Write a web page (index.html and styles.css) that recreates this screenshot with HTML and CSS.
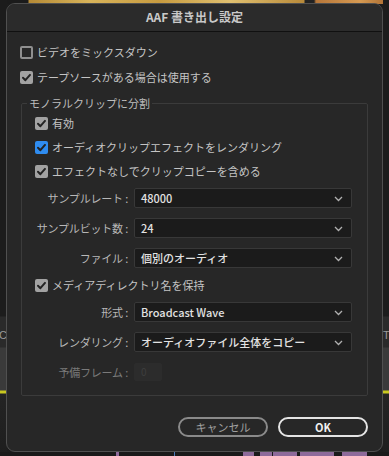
FILE: index.html
```html
<!DOCTYPE html>
<html lang="ja">
<head>
<meta charset="utf-8">
<link rel="stylesheet" href="styles.css">
</head>
<body>
<div class="backdrop">
  <div class="bg-top"></div>
  <div class="bg-left"><span class="bg-letter">C</span></div>
  <div class="bg-right"><span class="bg-letter">T</span></div>
  <div class="bg-bottom">
    <i class="clip c1"></i><i class="clip c2"></i><i class="clip c3"></i><i class="clip c4"></i><i class="clip c5"></i><i class="clip c6"></i><i class="mark"></i>
  </div>
</div>
<div class="stage">
  <div class="dialog">
    <div class="titlebar">AAF 書き出し設定</div>
    <div class="content">
      <label class="check-row first"><span class="box"></span>ビデオをミックスダウン</label>
      <label class="check-row second"><span class="box checked"><svg viewBox="0 0 13 13"><path d="M3 6.8 L5.4 9.2 L10 3.9" /></svg></span>テープソースがある場合は使用する</label>

      <fieldset class="group">
        <legend>モノラルクリップに分割</legend>
        <label class="check-row g1"><span class="box checked"><svg viewBox="0 0 13 13"><path d="M3 6.8 L5.4 9.2 L10 3.9" /></svg></span>有効</label>
        <label class="check-row g2"><span class="box checked blue"><svg viewBox="0 0 13 13"><path d="M3 6.8 L5.4 9.2 L10 3.9" /></svg></span>オーディオクリップエフェクトをレンダリング</label>
        <label class="check-row g2"><span class="box checked"><svg viewBox="0 0 13 13"><path d="M3 6.8 L5.4 9.2 L10 3.9" /></svg></span>エフェクトなしでクリップコピーを含める</label>

        <div class="field s1"><span class="flabel">サンプルレート :</span><div class="select">48000<svg class="chev" viewBox="0 0 9 6"><path d="M1 1 L4.5 4.5 L8 1"/></svg></div></div>
        <div class="field s2"><span class="flabel">サンプルビット数 :</span><div class="select">24<svg class="chev" viewBox="0 0 9 6"><path d="M1 1 L4.5 4.5 L8 1"/></svg></div></div>
        <div class="field s2"><span class="flabel">ファイル :</span><div class="select">個別のオーディオ<svg class="chev" viewBox="0 0 9 6"><path d="M1 1 L4.5 4.5 L8 1"/></svg></div></div>

        <label class="check-row g3"><span class="box checked"><svg viewBox="0 0 13 13"><path d="M3 6.8 L5.4 9.2 L10 3.9" /></svg></span>メディアディレクトリ名を保持</label>

        <div class="field s1"><span class="flabel">形式 :</span><div class="select">Broadcast Wave<svg class="chev" viewBox="0 0 9 6"><path d="M1 1 L4.5 4.5 L8 1"/></svg></div></div>
        <div class="field s2"><span class="flabel">レンダリング :</span><div class="select">オーディオファイル全体をコピー<svg class="chev" viewBox="0 0 9 6"><path d="M1 1 L4.5 4.5 L8 1"/></svg></div></div>
        <div class="field s2 disabled"><span class="flabel">予備フレーム :</span><div class="numbox">0</div></div>
      </fieldset>

      <div class="buttons">
        <button class="btn cancel">キャンセル</button>
        <button class="btn ok">OK</button>
      </div>
    </div>
  </div>
</div>
</body>
</html>
```

FILE: styles.css
```css
* { box-sizing: border-box; }
html, body {
  margin: 0;
  padding: 0;
}
body {
  width: 389px;
  height: 456px;
  overflow: hidden;
  background: #1d1d1d;
  font-family: "Noto Sans CJK JP", "Noto Sans", sans-serif;
  position: relative;
}

/* backdrop (app behind the modal) */
.backdrop {
  position: absolute;
  inset: 0;
  z-index: 0;
}
.bg-top {
  position: absolute;
  left: 0; top: 0; width: 389px; height: 4px;
  background: linear-gradient(90deg, #1b1b1b 0, #1b1b1b 28px, #b58a36 29px, #d8b45a 90px, #c79b40 160px, #e0c070 230px, #b88a3a 304px, #222 305px, #222 314px, #b7773a 316px, #d69a52 360px, #a86a30 389px);
}
.bg-left {
  position: absolute;
  left: 0; top: 0; width: 7px; height: 456px;
  background: linear-gradient(180deg, #1c1c1c 0, #1c1c1c 316px, #2a2a2a 317px, #2a2a2a 347px, #3a3a3a 348px, #3a3a3a 390px, #c9c820 391px, #c9c820 393px, #242424 394px, #1e1e1e 456px);
}
.bg-right {
  position: absolute;
  right: 0; top: 0; width: 6px; height: 456px;
  background: linear-gradient(180deg, #1c1c1c 0, #1c1c1c 316px, #2a2a2a 317px, #2a2a2a 347px, #3a3a3a 348px, #3a3a3a 390px, #c9c820 391px, #c9c820 393px, #242424 394px, #1e1e1e 456px);
}
.bg-letter {
  position: absolute;
  top: 328px;
  font-family: "Liberation Sans", sans-serif;
  font-size: 11px;
  line-height: 14px;
  color: #9a9a9a;
}
.bg-left .bg-letter { left: -1px; }
.bg-right .bg-letter { left: 0; }
.bg-bottom {
  position: absolute;
  left: 0; top: 452px; width: 389px; height: 4px;
  background: #1a1a1a;
}
.clip {
  position: absolute;
  top: 0; height: 4px;
  background: #8e6a9a;
}
.c1 { left: 116px; width: 3px; }
.c2 { left: 243px; width: 11px; }
.c3 { left: 260px; width: 12px; }
.c4 { left: 273px; width: 24px; }
.c5 { left: 300px; width: 34px; }
.c6 { left: 342px; width: 25px; }
.mark { position: absolute; left: 174px; top: 0; width: 1px; height: 4px; background: #4a7ab8; }

/* dialog */
.stage {
  position: relative;
  z-index: 1;
  padding: 3px 6px 0 6px;
}
.dialog {
  width: 377px;
  height: 449px;
  background: #272727;
  border: 1px solid #505050;
  border-radius: 9px;
  overflow: hidden;
  display: flex;
  flex-direction: column;
}
.titlebar {
  height: 28px;
  background: #2b2b2b;
  border-bottom: 1px solid #101010;
  display: flex;
  align-items: center;
  justify-content: center;
  font-size: 12px;
  font-weight: 700;
  color: #c9c9c9;
  padding-bottom: 2px;
}
.content {
  flex: 1;
  padding: 10px 14px 0 13px;
  display: flex;
  flex-direction: column;
}

.check-row {
  display: flex;
  align-items: center;
  height: 20px;
  font-size: 11px;
  color: #c4c4c4;
  gap: 4px;
}
.check-row.second { margin-top: 5px; }
.box {
  width: 13px;
  height: 13px;
  border-radius: 2px;
  border: 2px solid #8f8f8f;
  flex: none;
  display: flex;
  align-items: center;
  justify-content: center;
}
.box.checked {
  border: none;
  background: #a2a2a2;
}
.box.blue { background: #2f8cf0; }
.box svg { width: 13px; height: 13px; }
.box svg path {
  fill: none;
  stroke: #232323;
  stroke-width: 2;
  stroke-linecap: round;
  stroke-linejoin: round;
}

.group {
  margin: 8px 0 0 1px;
  width: 347px;
  border: 1px solid #3b3b3b;
  border-radius: 2px;
  padding: 2px 14px 13px 13px;
  min-width: 0;
}
.group legend {
  font-size: 11px;
  color: #bdbdbd;
  padding: 0 2px;
  margin-left: -8px;
  line-height: 16px;
}
.check-row.g2 { margin-top: 4px; }
.check-row.g3 { margin-top: 7px; }

.field {
  display: flex;
  align-items: center;
  height: 20px;
  gap: 6px;
}
.field.s1 { margin-top: 7px; }
.field.s2 { margin-top: 10px; }
.flabel {
  width: 93px;
  text-align: right;
  font-size: 11px;
  color: #b8b8b8;
  white-space: nowrap;
  letter-spacing: -0.2px;
}
.select {
  width: 218px;
  height: 20px;
  background: #1b1b1b;
  border: 1px solid #383838;
  border-radius: 2px;
  display: flex;
  align-items: center;
  padding-left: 6px;
  font-size: 11px;
  font-weight: 500;
  color: #e2e2e2;
  position: relative;
}
.chev {
  position: absolute;
  right: 8px;
  top: 7px;
  width: 9px;
  height: 6px;
}
.chev path {
  fill: none;
  stroke: #b0b0b0;
  stroke-width: 1.3;
}
.disabled .flabel { color: #7a7a7a; }
.numbox {
  width: 28px;
  height: 18px;
  background: #2c2c2c;
  border-radius: 2px;
  font-size: 10px;
  color: #3e3e3e;
  padding-left: 7px;
  line-height: 18px;
}

.buttons {
  display: flex;
  justify-content: flex-end;
  gap: 10px;
  margin-top: 21px;
}
.btn {
  width: 90px;
  height: 20px;
  border-radius: 10px;
  background: transparent;
  font-family: "Noto Sans CJK JP", "Noto Sans", sans-serif;
  font-size: 11px;
  padding: 0;
  display: flex;
  align-items: center;
  justify-content: center;
}
.btn.cancel {
  border: 2px solid #8a8a8a;
  color: #a0a0a0;
}
.btn.ok {
  border: 2px solid #e4e4e4;
  color: #f0f0f0;
  font-weight: 700;
}
```
